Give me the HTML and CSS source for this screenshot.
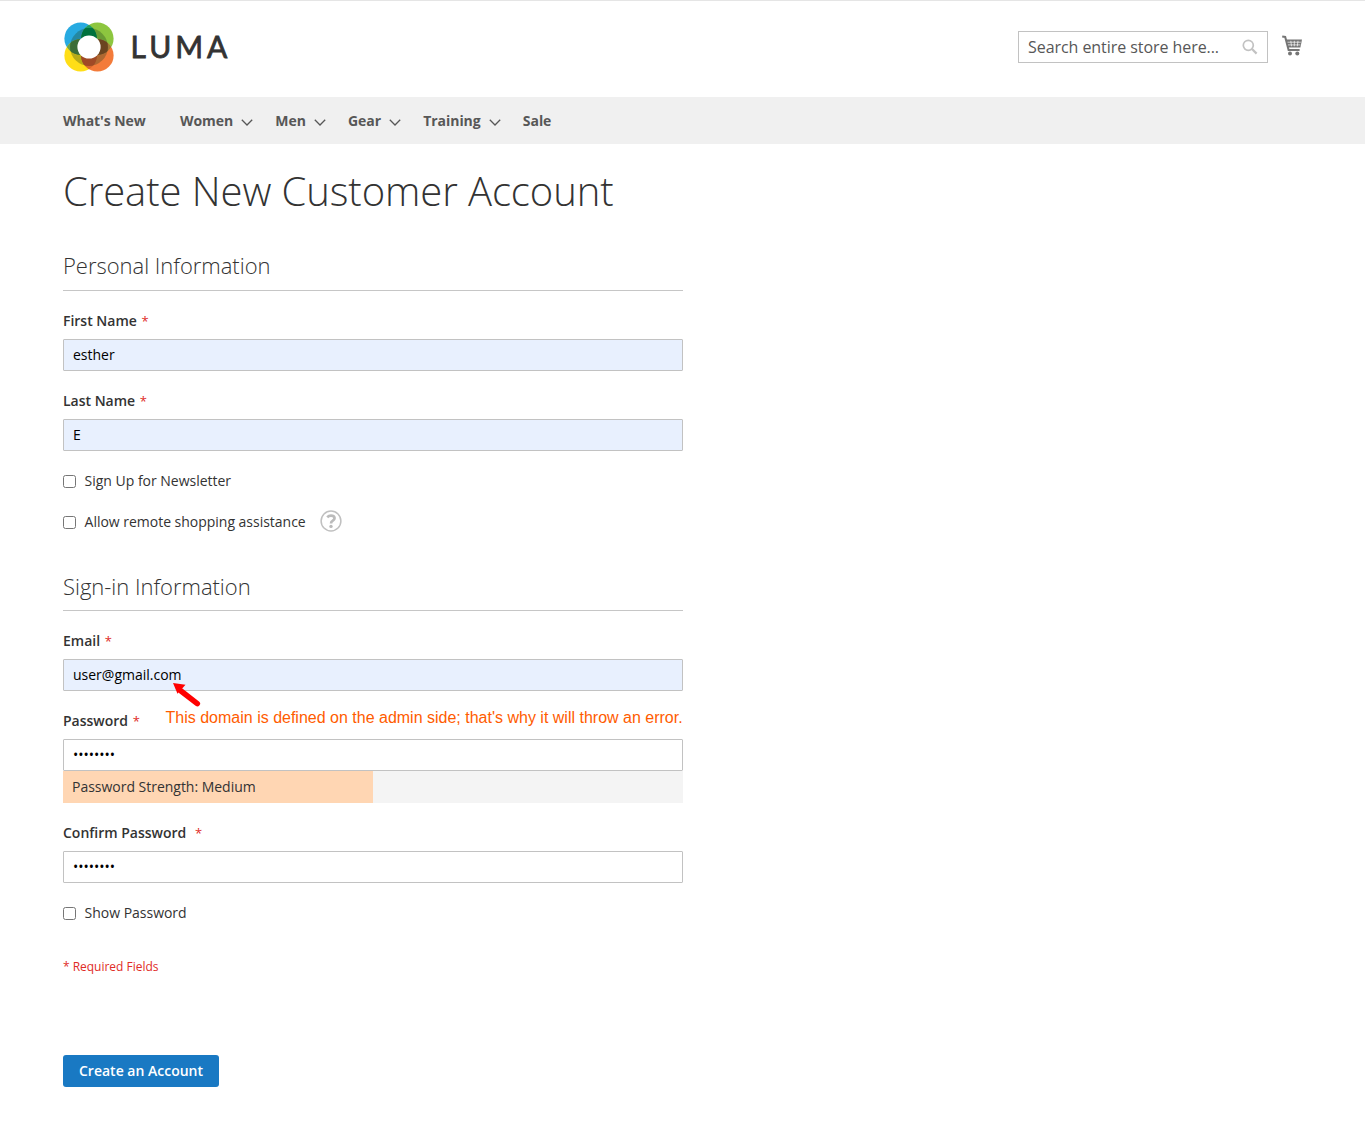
FILE: index.html
```html
<!DOCTYPE html>
<html lang="en">
<head>
<meta charset="utf-8">
<title>Create New Customer Account</title>
<link rel="stylesheet" href="styles.css">
</head>
<body>
<header class="header">
  <a class="logo" aria-label="Luma">
    <svg class="logo-mark" width="50" height="50" viewBox="-25 -25 50 50">
      <defs>
        <clipPath id="tl"><circle cx="-8.4" cy="-8.4" r="16.2"/></clipPath>
        <clipPath id="bl"><circle cx="-8.4" cy="8.4" r="16.2"/></clipPath>
        <clipPath id="petals"><circle cx="-8.4" cy="-8.4" r="16.2"/><circle cx="8.4" cy="-8.4" r="16.2"/><circle cx="-8.4" cy="8.4" r="16.2"/><circle cx="8.4" cy="8.4" r="16.2"/></clipPath>
        <clipPath id="tr"><circle cx="8.4" cy="-8.4" r="16.2"/></clipPath>
        <clipPath id="ring"><circle r="18.9"/></clipPath>
      </defs>
      <circle cx="-8.4" cy="-8.4" r="16.2" fill="#27aae1"/>
      <circle cx="8.4" cy="-8.4" r="16.2" fill="#8dc63f"/>
      <circle cx="-8.4" cy="8.4" r="16.2" fill="#ffde17"/>
      <circle cx="8.4" cy="8.4" r="16.2" fill="#f37b3a"/>
      <circle cx="8.4" cy="-8.4" r="16.2" fill="#1d9b62" clip-path="url(#tl)"/>
      <circle cx="-8.4" cy="8.4" r="16.2" fill="#6aa04a" clip-path="url(#tl)"/>
      <circle cx="8.4" cy="8.4" r="16.2" fill="#d9692c" clip-path="url(#bl)"/>
      <circle cx="8.4" cy="8.4" r="16.2" fill="#a07a38" clip-path="url(#tr)"/>
      <circle r="18.9" fill="#204020" fill-opacity=".32" clip-path="url(#petals)"/>
      <g clip-path="url(#ring)">
        <circle cx="8.4" cy="-8.4" r="16.2" fill="#00713d" clip-path="url(#tl)"/>
        <circle cx="-8.4" cy="8.4" r="16.2" fill="#3b6d37" clip-path="url(#tl)"/>
        <circle cx="8.4" cy="8.4" r="16.2" fill="#a04a26" clip-path="url(#bl)"/>
        <circle cx="8.4" cy="8.4" r="16.2" fill="#6b4420" clip-path="url(#tr)"/>
      </g>
      <circle r="11.6" fill="#fff"/>
    </svg>
    <span class="logo-text">LUMA</span>
  </a>
  <div class="header-tools">
    <div class="search">
      <span>Search entire store here...</span>
      <svg width="16" height="16" viewBox="0 0 16 16" fill="none" stroke="#c2c2c2"><circle cx="6.3" cy="6.3" r="5" stroke-width="1.7"/><path d="M10 10l4.6 4.6" stroke-width="2.2"/></svg>
    </div>
    <svg class="cart" width="20" height="21" viewBox="0 0 20 21"><path d="M.2 1.5L3.2 2 6.6 15H17.6" stroke="#757575" stroke-width="2" fill="none"/><path d="M4 4.6H20L18.4 12.4H6z" fill="#757575"/><path d="M5.5 7.2h13.3M6 9.9h12.3M8.8 5.8l.7 5.5M12.3 5.8v5.5M16 5.8l-.7 5.5" stroke="#fff" stroke-width=".7" fill="none"/><circle cx="8" cy="18.6" r="2" fill="#757575"/><circle cx="15.3" cy="18.6" r="2" fill="#757575"/></svg>
  </div>
</header>
<nav class="nav">
  <a class="nav-first">What's New</a>
  <a>Women <svg class="chev" viewBox="0 0 12 7"><path d="M.8.8L6 6 11.2.8"/></svg></a>
  <a>Men <svg class="chev" viewBox="0 0 12 7"><path d="M.8.8L6 6 11.2.8"/></svg></a>
  <a>Gear <svg class="chev" viewBox="0 0 12 7"><path d="M.8.8L6 6 11.2.8"/></svg></a>
  <a>Training <svg class="chev" viewBox="0 0 12 7"><path d="M.8.8L6 6 11.2.8"/></svg></a>
  <a>Sale</a>
</nav>
<main class="main">
  <h1>Create New Customer Account</h1>
  <form class="form">
    <section class="group personal">
      <h2>Personal Information</h2>
      <div class="field"><label>First Name <i>*</i></label><input class="filled" type="text" value="esther"></div>
      <div class="field"><label>Last Name <i>*</i></label><input class="filled" type="text" value="E"></div>
      <label class="choice newsletter"><input type="checkbox"><span>Sign Up for Newsletter</span></label>
      <label class="choice assistance"><input type="checkbox"><span>Allow remote shopping assistance</span>
        <svg class="help" width="22" height="22" viewBox="0 0 22 22"><circle cx="11" cy="11" r="9.9" fill="none" stroke="#c0c0c0" stroke-width="1.5"/><path d="M7.2 7.2Q8.8 5.7 11 5.7C15.4 5.7 15.2 9.2 12.8 10.6Q11 11.6 11 13.4" fill="none" stroke="#bbb" stroke-width="2.7"/><circle cx="11" cy="16.4" r="1.7" fill="#bbb"/></svg>
      </label>
    </section>
    <section class="group signin">
      <h2>Sign-in Information</h2>
      <div class="field email"><label>Email <i>*</i></label><input class="filled" type="text" value="user@gmail.com">
        <svg class="arrow" width="29" height="25" viewBox="0 0 29 25"><path d="M8 8L24.3 20.6" stroke="#f00" stroke-width="5.6" stroke-linecap="round"/><path d="M0 0L12.5 1.8L4.5 10.8z" fill="#f00"/></svg>
      </div>
      <div class="field password"><label>Password <i>*</i></label><span class="note">This domain is defined on the admin side; that's why it will throw an error.</span><input type="password" value="12345678">
        <div class="strength"><span>Password Strength: Medium</span></div>
      </div>
      <div class="field confirm"><label>Confirm Password <i>*</i></label><input type="password" value="12345678"></div>
      <label class="choice"><input type="checkbox"><span>Show Password</span></label>
    </section>
    <p class="required">* Required Fields</p>
    <button class="submit" type="button">Create an Account</button>
  </form>
</main>
</body>
</html>
```
FILE: styles.css
```css
* { box-sizing: border-box; }
body { margin: 0; height: 1127px; overflow: hidden; border-top: 1px solid #e5e5e5; background: #fff; color: #333; font: 14px/20px "Open Sans", sans-serif; letter-spacing: -.02px; }
.header { display: flex; justify-content: space-between; height: 96px; padding: 21px 63px 0 64px; }
.logo { display: flex; align-items: flex-start; gap: 16.5px; }
.logo-text { font: 400 30px/48px Lato, sans-serif; letter-spacing: 4px; color: #333; -webkit-text-stroke: .8px #333; }
.header-tools { display: flex; align-items: flex-start; gap: 14px; padding-top: 9px; }
.search { display: flex; justify-content: space-between; align-items: center; width: 250px; height: 32px; padding: 0 9px; border: 1px solid #c2c2c2; font-size: 16px; color: #575757; letter-spacing: -.06px; }
.cart { margin-top: 4px; }
.nav { display: flex; gap: 22.2px; height: 47px; padding: 0 63px; background: #f0f0f0; color: #575757; font-weight: 700; line-height: 47px; letter-spacing: -.05px; }
.nav a { display: flex; align-items: center; gap: 8px; }
.nav-first { margin-right: 12px; }
.chev { width: 12px; height: 7px; margin-top: 4px; fill: none; stroke: #575757; stroke-width: 1.3; }
.main { padding: 20px 63px 0; }
h1 { margin: 0; font-size: 40px; line-height: 54px; font-weight: 300; letter-spacing: -.08px; }
.form { width: 620px; margin-top: 37px; }
h2 { height: 36px; margin: 0 0 20px; border-bottom: 1px solid #c6c6c6; font-size: 22px; line-height: 20px; font-weight: 300; }
.signin h2 { line-height: 22px; }
.field { position: relative; height: 60px; margin-bottom: 20px; }
.field label { display: block; height: 28px; font-weight: 600; letter-spacing: -.01px; }
.field i { margin-left: 1px; color: #e02b27; font: 13px/20px "Open Sans", sans-serif; }
.field input { display: block; width: 100%; height: 32px; padding: 0 9px 2px; border: 1px solid #c2c2c2; border-radius: 1px; background: #fff; color: #000; font: 14px/20px "Open Sans", sans-serif; }
.field .filled { background: #e8f0fe; }
.choice { display: flex; align-items: center; height: 20px; }
.choice input { width: 13px; height: 13px; margin: 1px 8.6px 0 0; }
.newsletter { margin-bottom: 21px; }
.help { margin: -2px 0 0 14.4px; }
.signin { margin-top: 43px; }
.arrow { position: absolute; left: 110px; top: 52px; }
.note { position: absolute; right: .4px; top: -3px; color: #ff5c00; font: 16px/20px "Liberation Sans", sans-serif; letter-spacing: 0; white-space: nowrap; }
.password { height: 92px; }
.strength { height: 32px; padding-left: 9px; background: linear-gradient(90deg, #ffd6b3 50%, #f4f4f4 50%); line-height: 32px; }
.confirm i { margin-left: 5px; }
.required { margin: 34px 0 0; color: #e02b27; font-size: 12px; line-height: 20px; }
.submit { display: block; width: 156px; height: 32px; margin-top: 78px; padding: 0; border: 0; border-radius: 3px; background: #1979c3; color: #fff; font: 600 14px/20px "Open Sans", sans-serif; }
```
